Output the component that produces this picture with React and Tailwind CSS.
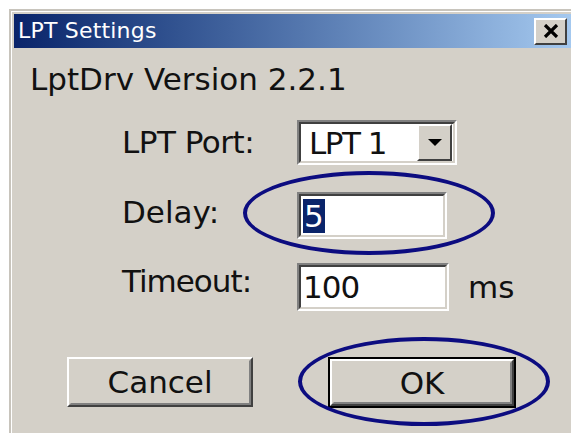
import React from 'react';

// Classic sunken field: dark outer/inner edge on top-left, light on bottom-right
const Field = ({ className = '', children }) => (
    <div className={`border-2 border-t-[#808080] border-l-[#808080] border-b-white border-r-white ${className}`}>
        <div className="h-full border-2 border-t-[#404040] border-l-[#404040] border-b-[#d4d0c8] border-r-[#d4d0c8] bg-white flex items-center">
            {children}
        </div>
    </div>
);

const Button = ({ label, isDefault, className = '' }) => {
    const inner = (
        <div className="h-full border-2 border-t-white border-l-white border-b-[#404040] border-r-[#404040]">
            <div className="h-full border-2 border-t-[#d4d0c8] border-l-[#d4d0c8] border-b-[#808080] border-r-[#808080] flex items-center justify-center text-[31px] text-[#111]">
                {label}
            </div>
        </div>
    );
    if (isDefault) {
        return <div className={`border-2 border-black ${className}`}>{inner}</div>;
    }
    return <div className={className}>{inner}</div>;
};

const CloseGlyph = () => (
    <svg width="16" height="14" viewBox="0 0 16 14">
        <path d="M2 1 L14 13 M14 1 L2 13" stroke="#000" strokeWidth="3.2" fill="none" />
    </svg>
);

const App = () => {
    return (
        <div className="relative w-[571px] h-[433px] overflow-hidden bg-white font-['DejaVu_Sans',sans-serif]">
            <div className="ml-[9px] mt-[9px] w-[566px] h-[440px] border-t-2 border-l-2 border-[#c8c4bc] bg-[#d4d0c8]">
                <div className="h-full border-t border-l border-white pl-[2px] pt-[2px]">
                    {/* title bar */}
                    <div className="h-[34px] flex items-center justify-between pl-[4px] pr-[8px] bg-gradient-to-r from-[#0a246a] to-[#a6caf0]">
                        <span className="text-[22px] text-white leading-none tracking-[0.2px]">LPT Settings</span>
                        <div className="w-[33px] h-[27px] border-2 border-t-white border-l-white border-b-[#404040] border-r-[#404040] bg-[#d4d0c8] flex items-center justify-center">
                            <CloseGlyph />
                        </div>
                    </div>

                    <div className="flex flex-col text-[31px] text-[#111] leading-[36px]">
                        <div className="pl-[16px] mt-[13px]">LptDrv Version 2.2.1</div>

                        {/* LPT Port */}
                        <div className="flex items-start ml-[108px] mt-[23px] h-[45px]">
                            <div className="w-[175px] mt-[4px] tracking-[-0.5px]">LPT Port:</div>
                            <Field className="w-[160px] h-[45px]">
                                <span className="pl-[8px] flex-1 tracking-[-1.5px]">LPT 1</span>
                                <div className="w-[35px] h-[37px] mr-[1px] border-2 border-t-white border-l-white border-b-[#404040] border-r-[#404040] bg-[#d4d0c8] flex items-center justify-center">
                                    <svg width="14" height="8" viewBox="0 0 14 8">
                                        <path d="M0 0 L14 0 L7 7 Z" fill="#000" />
                                    </svg>
                                </div>
                            </Field>
                        </div>

                        {/* Delay */}
                        <div className="flex items-start ml-[108px] mt-[27px] h-[47px]">
                            <div className="w-[175px] mt-[2px]">Delay:</div>
                            <Field className="w-[150px] h-[47px]">
                                <span className="ml-[2px] bg-[#0a246a] text-white px-[1px] leading-[34px]">5</span>
                            </Field>
                        </div>

                        {/* Timeout */}
                        <div className="flex items-start ml-[108px] mt-[24px] h-[48px]">
                            <div className="w-[175px] tracking-[-1px]">Timeout:</div>
                            <Field className="w-[152px] h-[48px]">
                                <span className="pl-[2px] tracking-[-1px]">100</span>
                            </Field>
                            <span className="ml-[19px] mt-[6px]">ms</span>
                        </div>

                        {/* buttons */}
                        <div className="flex mt-[46px] ml-[53px] gap-[75px]">
                            <Button label="Cancel" className="w-[186px] h-[50px]" />
                            <Button label="OK" isDefault className="w-[188px] h-[51px]" />
                        </div>
                    </div>
                </div>
            </div>

            {/* hand-drawn highlight rings */}
            <div className="absolute left-[243px] top-[171px] w-[252px] h-[84px] rounded-[50%] border-[4px] border-[#0c0c80]" />
            <div className="absolute left-[298px] top-[337px] w-[252px] h-[89px] rounded-[50%] border-[4px] border-[#0c0c80]" />
        </div>
    );
};

export default App;
